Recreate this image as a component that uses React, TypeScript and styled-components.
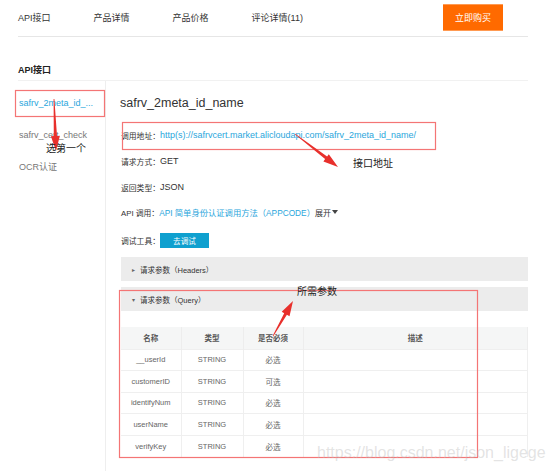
import styled, { createGlobalStyle } from 'styled-components';

const GlobalStyle = createGlobalStyle`
  html, body {
    margin: 0;
    padding: 0;
    background: #fff;
  }
  body {
    font-family: "Liberation Sans", "Noto Sans CJK SC", Arial, sans-serif;
    color: #333;
  }
  * {
    box-sizing: border-box;
  }
`;

const LINK_BLUE = '#2aa6dc';
const NOTE_RED = '#f47575';
const ARROW_RED = '#e8302c';

interface Param {
  name: string;
  type: string;
  required: string;
}

const params: Param[] = [
  { name: '__userId', type: 'STRING', required: '必选' },
  { name: 'customerID', type: 'STRING', required: '可选' },
  { name: 'identifyNum', type: 'STRING', required: '必选' },
  { name: 'userName', type: 'STRING', required: '必选' },
  { name: 'verifyKey', type: 'STRING', required: '必选' },
];

// builds a tapered arrow polygon from tail to tip
function arrowPoints(
  x1: number,
  y1: number,
  x2: number,
  y2: number,
  headLen = 15,
  headHalf = 4.5,
  shaftHalf = 1.6,
) {
  const len = Math.hypot(x2 - x1, y2 - y1);
  const dx = (x2 - x1) / len;
  const dy = (y2 - y1) / len;
  const nx = -dy;
  const ny = dx;
  const bx = x2 - dx * headLen;
  const by = y2 - dy * headLen;
  const pts = [
    [x1 + nx * 0.4, y1 + ny * 0.4],
    [bx + nx * shaftHalf, by + ny * shaftHalf],
    [bx + nx * headHalf, by + ny * headHalf],
    [x2, y2],
    [bx - nx * headHalf, by - ny * headHalf],
    [bx - nx * shaftHalf, by - ny * shaftHalf],
    [x1 - nx * 0.4, y1 - ny * 0.4],
  ];
  return pts.map(([x, y]) => `${x.toFixed(1)},${y.toFixed(1)}`).join(' ');
}

export default function App() {
  return (
    <Page>
      <GlobalStyle />
      <Content>
        <Nav>
          <NavItem>API接口</NavItem>
          <NavItem>产品详情</NavItem>
          <NavItem>产品价格</NavItem>
          <NavItem>评论详情(11)</NavItem>
          <BuyButton type="button">立即购买</BuyButton>
        </Nav>

        <SectionTitle>API接口</SectionTitle>

        <Body>
          <Sidebar>
            <SideItem $active>safrv_2meta_id_...</SideItem>
            <SideItem>safrv_cert_check</SideItem>
            <SideItem>OCR认证</SideItem>
          </Sidebar>

          <Main>
            <ApiTitle>safrv_2meta_id_name</ApiTitle>

            <InfoRow $height={26}>
              <Label>调用地址：</Label>
              <Link>http(s)://safrvcert.market.alicloudapi.com/safrv_2meta_id_name/</Link>
            </InfoRow>
            <InfoRow $height={26}>
              <Label>请求方式：</Label>
              <Value>GET</Value>
            </InfoRow>
            <InfoRow $height={26}>
              <Label>返回类型：</Label>
              <Value>JSON</Value>
            </InfoRow>
            <InfoRow $height={24}>
              <Label>API 调用：</Label>
              <Link $small>API 简单身份认证调用方法（APPCODE）</Link>
              <Expand>
                展开
                <Caret />
              </Expand>
            </InfoRow>
            <InfoRow $height={32}>
              <Label>调试工具：</Label>
              <DebugButton type="button">去调试</DebugButton>
            </InfoRow>

            <Panel $gap={1}>
              <Toggle>▸</Toggle>请求参数（Headers）
            </Panel>
            <Panel $gap={6}>
              <Toggle>▾</Toggle>请求参数（Query）
            </Panel>

            <ParamTable>
              <colgroup>
                <col style={{ width: 60 }} />
                <col style={{ width: 62 }} />
                <col style={{ width: 60 }} />
                <col />
              </colgroup>
              <thead>
                <tr>
                  <Th>名称</Th>
                  <Th>类型</Th>
                  <Th>是否必须</Th>
                  <Th>描述</Th>
                </tr>
              </thead>
              <tbody>
                {params.map((p) => (
                  <tr key={p.name}>
                    <Td>{p.name}</Td>
                    <Td>{p.type}</Td>
                    <Td>{p.required}</Td>
                    <Td />
                  </tr>
                ))}
              </tbody>
            </ParamTable>
          </Main>
        </Body>
      </Content>

      <Overlay width="554" height="471" viewBox="0 0 554 471">
        <rect x="15.5" y="90.5" width="89" height="26" fill="none" stroke={NOTE_RED} strokeWidth="1.2" />
        <rect x="122.5" y="122.5" width="313" height="27" fill="none" stroke={NOTE_RED} strokeWidth="1.2" />
        <rect x="119.5" y="290.5" width="358" height="167" fill="none" stroke={NOTE_RED} strokeWidth="1.2" />
        <polygon points={arrowPoints(54, 99, 56, 151)} fill={ARROW_RED} />
        <polygon points={arrowPoints(295, 134, 338, 167)} fill={ARROW_RED} />
        <polygon points={arrowPoints(273, 336, 293, 301)} fill={ARROW_RED} />
      </Overlay>

      <Note $left={46} $top={141}>选第一个</Note>
      <Note $left={353} $top={156}>接口地址</Note>
      <Note $left={297} $top={284}>所需参数</Note>

      <Watermark>https://blog.csdn.net/json_ligege</Watermark>
    </Page>
  );
}

const Page = styled.div`
  position: relative;
  width: 554px;
  height: 471px;
  overflow: hidden;
  background: #fff;
`;

const Content = styled.div`
  width: 528px;
  padding-left: 18px;
`;

const Nav = styled.div`
  height: 37px;
  display: flex;
  align-items: center;
  gap: 43px;
  border-bottom: 1px solid #e6e6e6;
  padding-bottom: 1px;
`;

const NavItem = styled.span`
  font-size: 9px;
  color: #333;
`;

const BuyButton = styled.button`
  margin-left: auto;
  margin-right: 25px;
  width: 60px;
  height: 27px;
  border: none;
  border-top: 1px solid #ff9a52;
  border-bottom: 1px solid #ff9a52;
  background: #ff6a00;
  color: #fff;
  font-family: inherit;
  font-size: 9px;
  padding: 0;
`;

const SectionTitle = styled.div`
  padding-top: 27px;
  padding-bottom: 4px;
  line-height: 12px;
  font-size: 9px;
  font-weight: bold;
  color: #222;
  border-bottom: 1px solid #f1f1f1;
`;

const Body = styled.div`
  display: flex;
  height: 390px;
`;

const Sidebar = styled.div`
  width: 88px;
  border-right: 1px solid #eee;
  padding-top: 9px;
  padding-left: 1px;
  display: flex;
  flex-direction: column;
  gap: 6px;
`;

const SideItem = styled.div<{ $active?: boolean }>`
  height: 26px;
  line-height: 26px;
  font-size: 9px;
  white-space: nowrap;
  color: ${({ $active }) => ($active ? LINK_BLUE : '#777')};
`;

const Main = styled.div`
  flex: 1;
  padding-left: 15px;
  padding-top: 9px;
`;

const ApiTitle = styled.div`
  height: 26px;
  line-height: 26px;
  font-size: 12.5px;
  color: #333;
  margin-left: -1px;
  margin-bottom: 6px;
`;

const InfoRow = styled.div<{ $height: number }>`
  height: ${({ $height }) => $height}px;
  display: flex;
  align-items: center;
  white-space: nowrap;
`;

const Label = styled.span`
  font-size: 7.8px;
  color: #333;
`;

const Value = styled.span`
  font-size: 9px;
  color: #333;
`;

const Link = styled.span<{ $small?: boolean }>`
  font-size: ${({ $small }) => ($small ? '8.3px' : '9px')};
  color: ${LINK_BLUE};
`;

const Expand = styled.span`
  font-size: 8px;
  color: #333;
  display: inline-flex;
  align-items: center;
`;

const Caret = styled.span`
  width: 0;
  height: 0;
  margin-left: 1px;
  border-left: 3.5px solid transparent;
  border-right: 3.5px solid transparent;
  border-top: 4px solid #444;
`;

const DebugButton = styled.button`
  width: 49px;
  height: 15px;
  border: none;
  padding: 0;
  background: #0fa0cf;
  color: #fff;
  font-family: inherit;
  font-size: 7.6px;
`;

const Panel = styled.div<{ $gap: number }>`
  margin-top: ${({ $gap }) => $gap}px;
  height: 24px;
  display: flex;
  align-items: center;
  padding-left: 11px;
  background: #ececec;
  font-size: 7.5px;
  color: #333;
`;

const Toggle = styled.span`
  font-size: 6px;
  color: #666;
  width: 8px;
`;

const ParamTable = styled.table`
  margin-top: 16px;
  width: 100%;
  border-collapse: collapse;
  table-layout: fixed;
  border-right: 1px solid #f0f0f0;
`;

const Th = styled.th`
  height: 22px;
  padding: 0;
  background: #f5f6f6;
  font-size: 7.5px;
  font-weight: 600;
  color: #555;
  text-align: center;
  border-right: 1px solid #ededed;
`;

const Td = styled.td`
  height: 21.6px;
  padding: 0;
  font-size: 7.5px;
  color: #666;
  text-align: center;
  border-top: 1px solid #efefef;
  border-right: 1px solid #efefef;
`;

const Overlay = styled.svg`
  position: absolute;
  left: 0;
  top: 0;
  pointer-events: none;
`;

const Note = styled.span<{ $left: number; $top: number }>`
  position: absolute;
  left: ${({ $left }) => $left}px;
  top: ${({ $top }) => $top}px;
  font-family: "Noto Sans CJK SC", sans-serif;
  font-size: 10px;
  line-height: 14px;
  color: #222;
`;

const Watermark = styled.span`
  position: absolute;
  left: 317px;
  top: 444px;
  font-family: "Liberation Sans", Arial, sans-serif;
  font-size: 16px;
  line-height: 18px;
  color: rgba(185, 185, 185, 0.4);
  white-space: nowrap;
`;
